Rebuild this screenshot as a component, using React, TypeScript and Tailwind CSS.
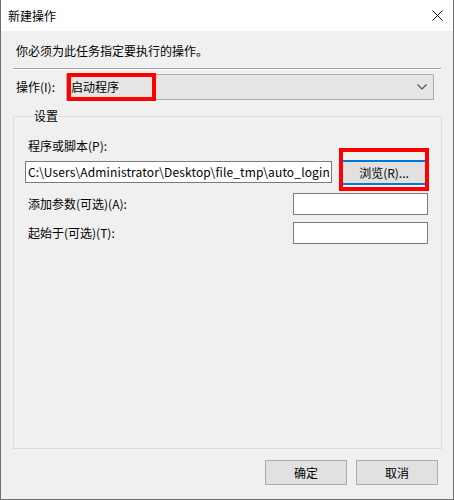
import React from "react";

const font = { fontFamily: '"Microsoft YaHei UI", "Noto Sans CJK SC", "Noto Sans", sans-serif' };

export default function App() {
  return (
    <div
      className="w-[454px] h-[500px] flex flex-col border-l border-r border-b border-[#6e6e6e] bg-[#f0f0f0] text-[12px] leading-[16px] text-black"
      style={font}
    >
      {/* title bar */}
      <div className="h-[31px] bg-white flex items-center justify-between pl-[7px] pr-[10px] shrink-0">
        <span>新建操作</span>
        <svg width="11" height="11" viewBox="0 0 11 11">
          <path d="M0.5 0.5 L10.5 10.5 M10.5 0.5 L0.5 10.5" stroke="#111" strokeWidth="1" />
        </svg>
      </div>

      <div className="flex flex-col px-[12px]">
        <div className="pt-[12px] pl-[3px] h-[28px]">你必须为此任务指定要执行的操作。</div>
        {/* separator */}
        <div className="mt-[9px] h-[2px] border-t border-[#a0a0a0] border-b border-b-white w-[428px]" />

        {/* action row */}
        <div className="mt-[4px] flex items-center h-[26px]">
          <span className="pl-[3px] w-[53px]">操作(I):</span>
          <div className="relative w-[368px] h-[26px] border border-[#adadad] bg-[#e5e5e5] flex items-center justify-between pl-[4px] pr-[6px]">
            <span>启动程序</span>
            <svg width="10" height="6" viewBox="0 0 10 6">
              <path d="M0.5 0.5 L5 5 L9.5 0.5" stroke="#555" strokeWidth="1.2" fill="none" />
            </svg>
            <div className="absolute left-[0px] top-[-2px] w-[89px] h-[28px] border-[4px] border-[#ff0000]" />
          </div>
        </div>

        {/* settings group */}
        <fieldset className="mt-[8px] border border-[#dcdcdc] w-[428px] h-[341px] pl-[11px] pr-[12px]">
          <legend className="ml-[8px] px-[1px]">设置</legend>
          <div className="pl-[3px] mt-[14px]">程序或脚本(P):</div>
          <div className="mt-[7px] flex items-start">
            <div className="w-[307px] h-[22px] border border-[#7a7a7a] bg-white pl-[2px] overflow-hidden whitespace-nowrap leading-[20px] tracking-[0.14px]">
              C:\Users\Administrator\Desktop\file_tmp\auto_login
            </div>
            <div className="relative ml-[7px] mt-[-1px]">
              <div className="w-[90px] h-[25px] bg-[#e1e1e1] border-t-2 border-b-2 border-[#0078d7] flex items-center justify-center">
                浏览(R)...
              </div>
              <div className="absolute left-0 top-[-12px] w-[90px] h-[43px] border-[4px] border-[#ff0000]" />
            </div>
          </div>
          <div className="mt-[8px] flex items-center justify-between">
            <span className="pl-[3px]">添加参数(可选)(A):</span>
            <div className="w-[135px] h-[22px] border border-[#7a7a7a] bg-white mr-[1px]" />
          </div>
          <div className="mt-[7px] flex items-center justify-between">
            <span className="pl-[3px]">起始于(可选)(T):</span>
            <div className="w-[135px] h-[22px] border border-[#7a7a7a] bg-white mr-[1px]" />
          </div>
        </fieldset>

        {/* buttons */}
        <div className="mt-[11px] flex justify-end gap-[9px] pr-[3px]">
          <div className="w-[82px] h-[25px] border border-[#adadad] bg-[#e1e1e1] flex items-center justify-center">确定</div>
          <div className="w-[82px] h-[25px] border border-[#adadad] bg-[#e1e1e1] flex items-center justify-center">取消</div>
        </div>
      </div>
    </div>
  );
}
